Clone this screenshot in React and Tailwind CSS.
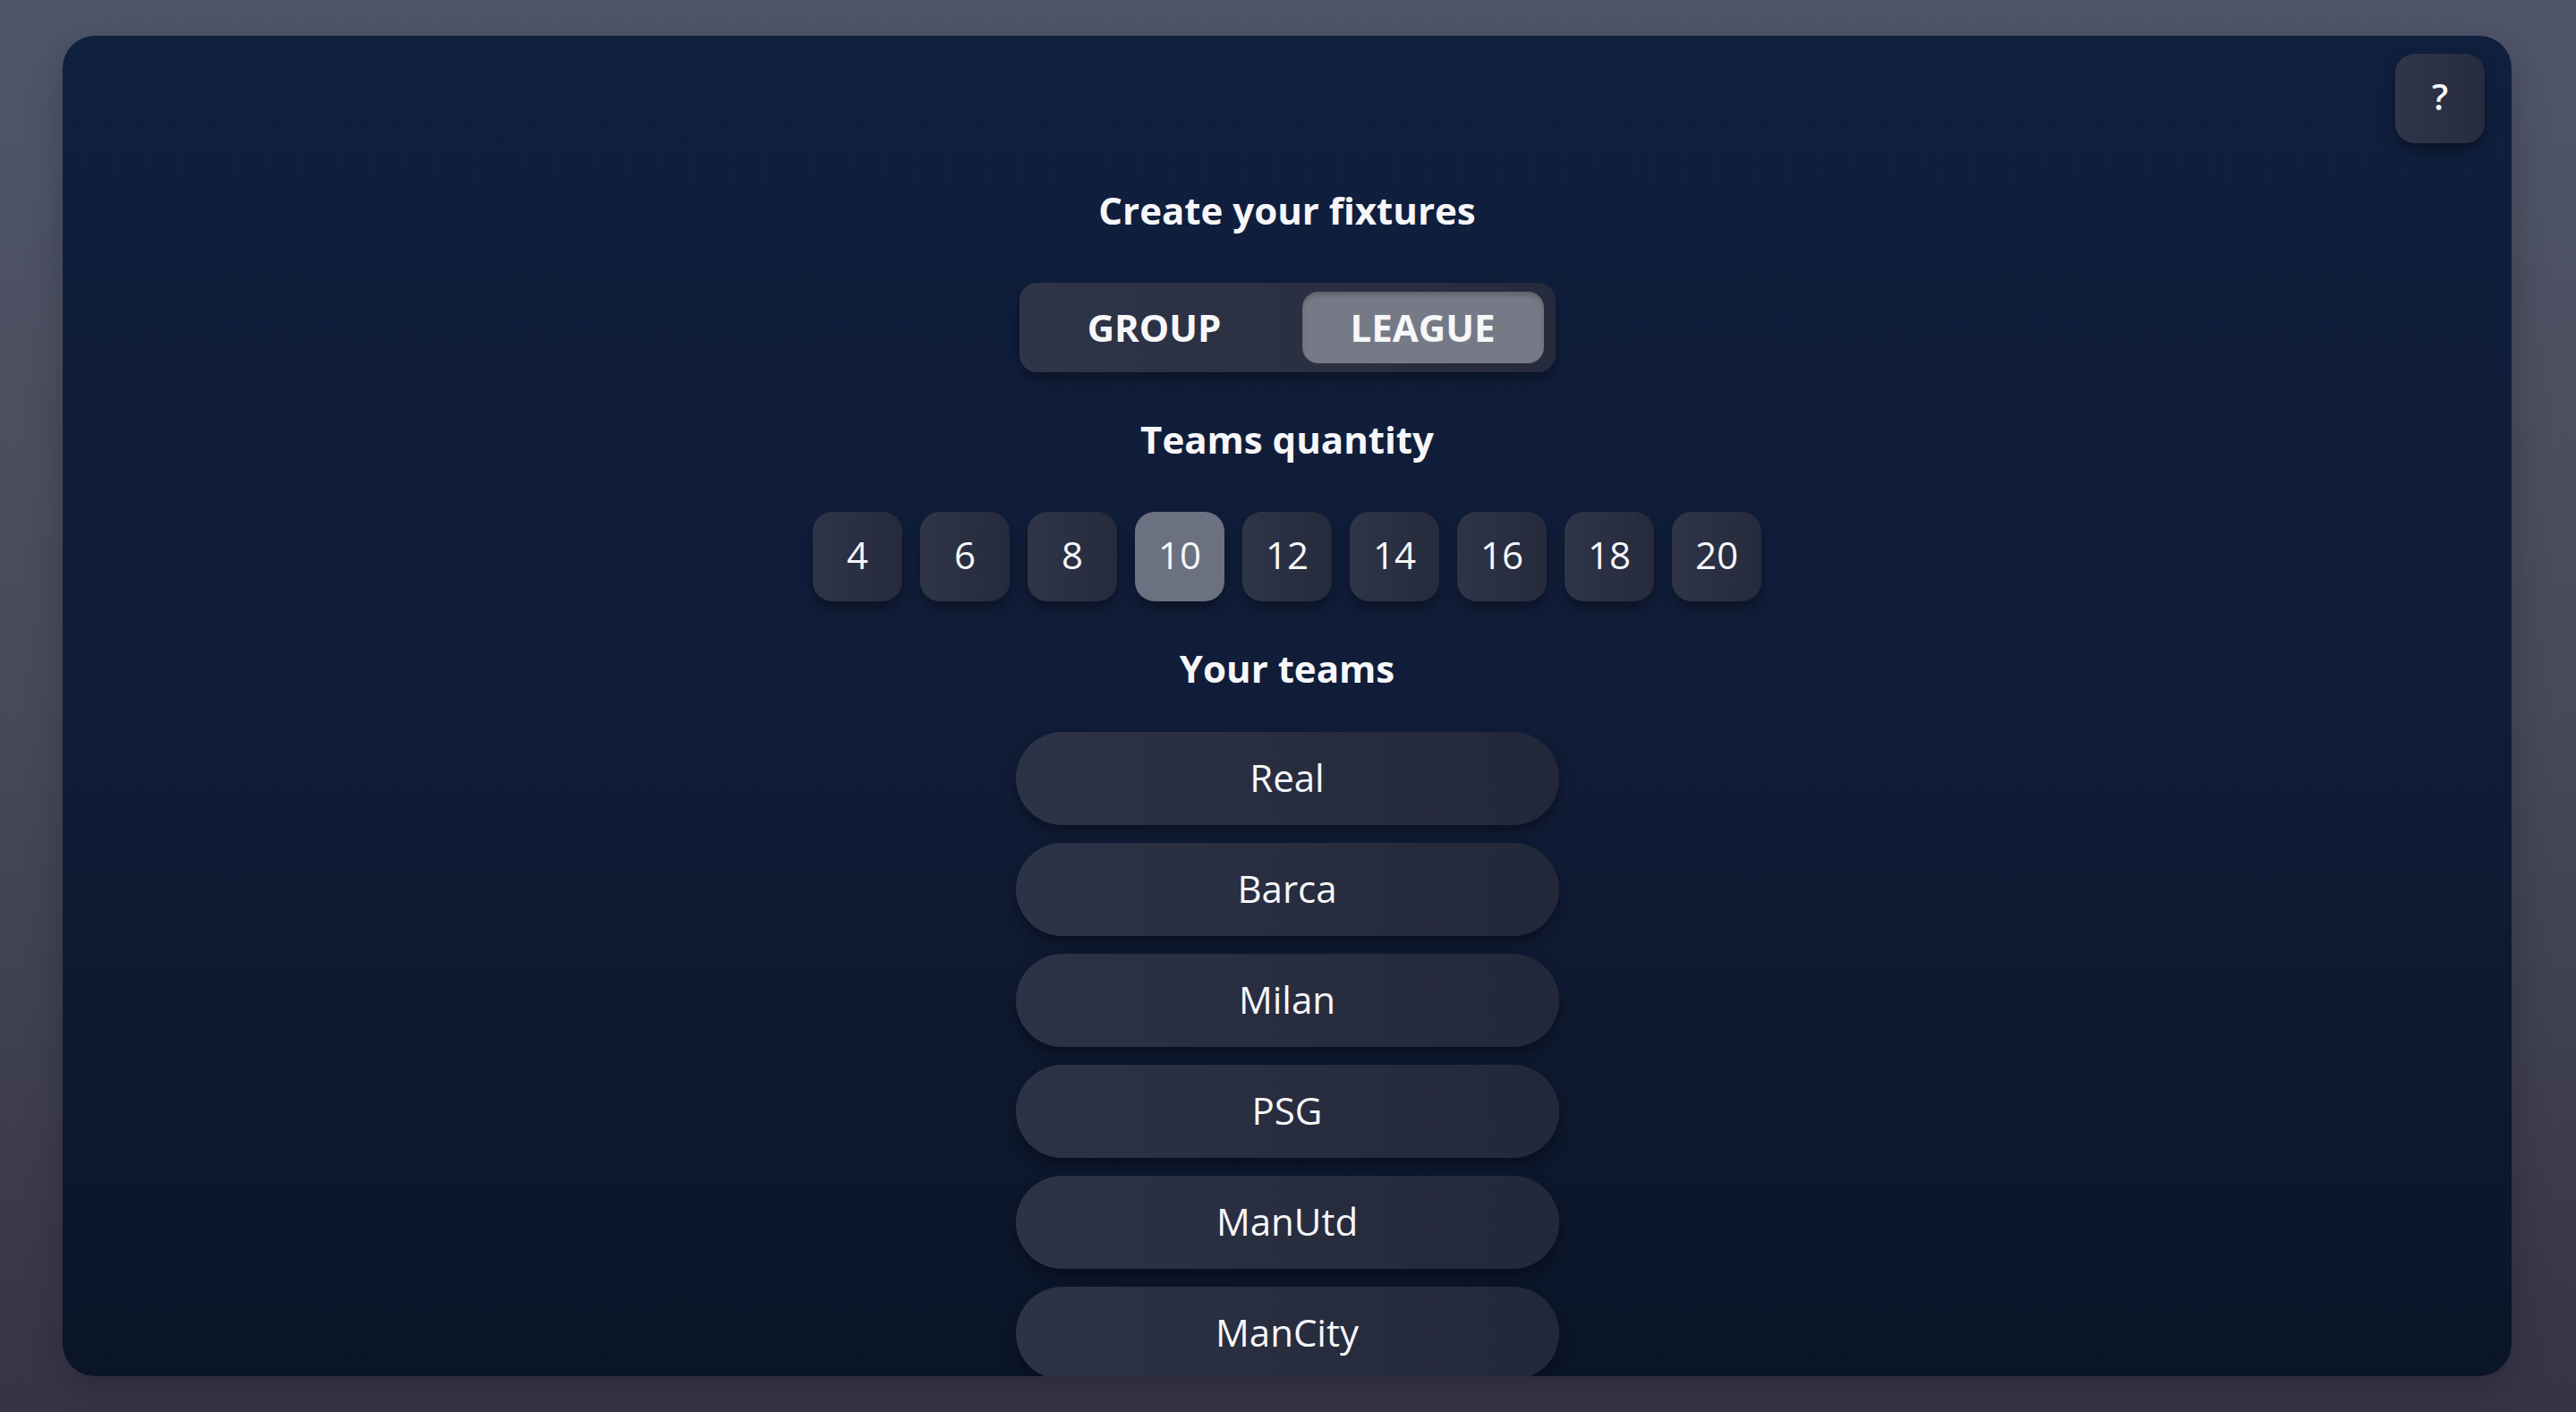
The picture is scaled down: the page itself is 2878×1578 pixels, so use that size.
import { useState } from "react";

const counts = [4, 6, 8, 10, 12, 14, 16, 18, 20];
const teams = ["Real", "Barca", "Milan", "PSG", "ManUtd", "ManCity"];

export default function App() {
  const [mode, setMode] = useState("league");
  const [qty, setQty] = useState(10);

  return (
    <div
      className="h-screen flex pt-[40px] pb-[40px] pl-[70px] pr-[72px] bg-gradient-to-b from-[#50566a] via-[#474a58] to-[#363447] text-[#f7f7f9]"
      style={{ fontFamily: '"Open Sans", "Noto Sans", sans-serif' }}
    >
      <div className="relative flex-1 flex flex-col items-center overflow-hidden rounded-[36px] bg-gradient-to-b from-[#0f1f3e] via-[#111d38] to-[#0b1528] shadow-[0_10px_40px_rgba(0,0,0,0.22)] pt-[170px]">
        {/* help */}
        <button className="absolute top-[20px] right-[30px] w-[100px] h-[100px] rounded-[22px] bg-gradient-to-r from-[#30364a] to-[#272b3e] shadow-[0_8px_14px_rgba(0,0,0,0.35)] flex items-center justify-center pb-[4px] text-[40px] leading-none font-semibold">
          ?
        </button>

        <h1 className="text-[42px] leading-[50px] font-bold">Create your fixtures</h1>

        {/* MODE TOGGLE */}
        <div className="mt-[56px] w-[599px] h-[100px] pt-[10px] pb-[10px] pl-[12px] pr-[13px] flex gap-[34px] rounded-[20px] bg-gradient-to-r from-[#2f3548] to-[#262a3d] shadow-[0_8px_16px_rgba(0,0,0,0.35)]">
          {[
            ["group", "GROUP"],
            ["league", "LEAGUE"],
          ].map(([key, label]) => (
            <button
              key={key}
              onClick={() => setMode(key)}
              className={
                mode === key
                  ? "w-[270px] h-[80px] rounded-[18px] bg-[#767a86] shadow-[inset_0_4px_5px_rgba(0,0,0,0.18)] text-[42px] leading-none font-bold"
                  : "w-[270px] h-[80px] rounded-[18px] pl-[8px] text-[42px] leading-none font-bold"
              }
            >
              {label}
            </button>
          ))}
        </div>

        <h2 className="mt-[50px] text-[42px] leading-[50px] font-bold">Teams quantity</h2>

        {/* QUANTITY */}
        <div className="mt-[56px] flex gap-[20px]">
          {counts.map((n) => (
            <button
              key={n}
              onClick={() => setQty(n)}
              className={
                qty === n
                  ? "w-[100px] h-[100px] rounded-[22px] bg-[#6b7180] shadow-[0_8px_14px_rgba(0,0,0,0.35)] pb-[4px] text-[42px] leading-none"
                  : "w-[100px] h-[100px] rounded-[22px] bg-gradient-to-r from-[#2f3548] to-[#252a3c] shadow-[0_8px_14px_rgba(0,0,0,0.35)] pb-[4px] text-[42px] leading-none"
              }
            >
              {n}
            </button>
          ))}
        </div>

        <h2 className="mt-[50px] text-[42px] leading-[50px] font-bold">Your teams</h2>

        {/* TEAMS */}
        <div className="mt-[46px] flex flex-col gap-[20px]">
          {teams.map((t) => (
            <div
              key={t}
              className="w-[607px] h-[104px] shrink-0 rounded-full bg-gradient-to-r from-[#2d3346] to-[#23273a] shadow-[0_8px_14px_rgba(0,0,0,0.35)] flex items-center justify-center pb-[2px] text-[42px] leading-none"
            >
              {t}
            </div>
          ))}
        </div>
      </div>
    </div>
  );
}
